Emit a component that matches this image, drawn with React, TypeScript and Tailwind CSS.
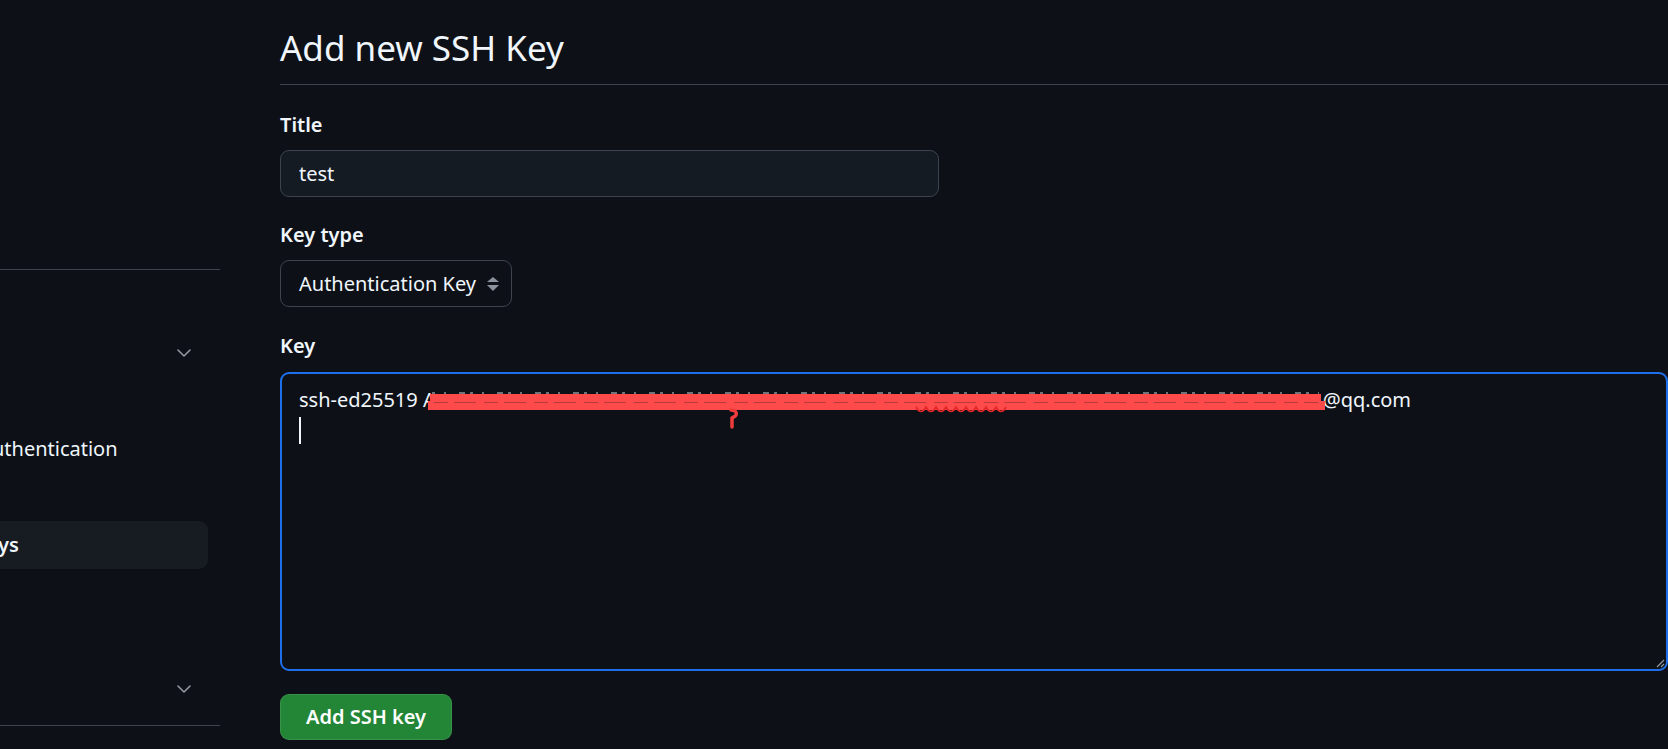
import { ChevronDown } from 'lucide-react'

const navItems = [
  { label: 'Billing and plans', chevron: true },
  { label: 'Emails' },
  { label: 'Password and authentication' },
  { label: 'Sessions' },
  { label: 'SSH and GPG keys', active: true },
  { label: 'Organizations' },
  { label: 'Enterprises' },
  { label: 'Moderation', chevron: true },
]

function Sidebar() {
  return (
    <aside className="w-[220px] shrink-0 overflow-hidden">
      <div className="h-[269px]" />
      <div className="border-t border-[#3d444d]" />
      <div className="-ml-[172px] flex h-[59px] items-center pl-4 text-[18px] font-semibold text-[#9198a1]">
        Access
      </div>
      <ul className="-ml-[172px] w-[380px]">
        {navItems.map((item) => (
          <li
            key={item.label}
            className={`flex h-12 items-center justify-between whitespace-nowrap rounded-[9px] pl-4 pr-3 ${
              item.active ? 'bg-[#171b22] font-semibold' : ''
            }`}
          >
            <span>{item.label}</span>
            {item.chevron && <ChevronDown className="h-6 w-6 text-[#9198a1]" strokeWidth={1.6} />}
          </li>
        ))}
      </ul>
      <div className="mt-3 border-t border-[#3d444d]" />
    </aside>
  )
}

function Redaction() {
  // scribble drawn over the private part of the key
  const loops = Array.from({ length: 9 }, () => 'q5 9 10 0').join(' ')
  return (
    <svg className="absolute left-0 top-0 overflow-visible" width="893" height="30" viewBox="0 0 893 30">
      <rect x="0" y="9" width="891" height="15" fill="#fd4a4a" />
      <rect x="-2" y="16" width="897" height="9" fill="#fd4a4a" />
      <line x1="2" y1="8" x2="889" y2="8" stroke="#d8d8d8" strokeWidth="1" strokeDasharray="3 9 2 13 6 5" />
      <line x1="4" y1="17.5" x2="888" y2="17.5" stroke="#b83a3a" strokeWidth="1" strokeDasharray="14 6 22 8" />
      <path d="M301 25c4 0 6 2 5 5c-1 2-3 2-4 3l0 9" fill="none" stroke="#f23c3c" strokeWidth="3.5" strokeLinecap="round" />
      <path d={`M486 22 ${loops}`} fill="none" stroke="#e4282a" strokeWidth="1.6" />
    </svg>
  )
}

export default function App() {
  return (
    <div className="flex h-[749px] w-[1668px] overflow-hidden bg-[#0d1117] font-['Noto_Sans',sans-serif] text-[20px] leading-[30px] text-[#f0f6fc]">
      <Sidebar />

      <main className="ml-[60px] min-w-0 flex-1">
        <h1 className="border-b border-[#3d444d] pt-[22px] pb-[11px] text-[35px] font-normal leading-[51px]">
          Add new SSH Key
        </h1>

        <label className="mt-[25px] block font-semibold">Title</label>
        <input
          defaultValue="test"
          className="mt-[10px] block h-[47px] w-[659px] rounded-[9px] border border-[#3d444d] bg-[#151b23] px-[18px] text-[#f0f6fc] outline-none"
        />

        <label className="mt-[23px] block font-semibold">Key type</label>
        <button
          type="button"
          className="mt-[10px] flex h-[47px] w-[232px] items-center justify-between rounded-[9px] border border-[#3d444d] bg-[#0d1117] pl-[18px] pr-[12px]"
        >
          <span>Authentication Key</span>
          <svg width="12" height="14" viewBox="0 0 12 14" className="text-[#8b929b]">
            <path d="M0 5L6 0L12 5Z" fill="currentColor" />
            <path d="M0 8L12 8L6 14Z" fill="currentColor" />
          </svg>
        </button>

        <label className="mt-[24px] block font-semibold">Key</label>
        <div className="relative mt-[11px] h-[299px] w-full rounded-[9px] border-2 border-[#1f6feb] bg-[#0d1117] pl-[17px] pt-[11px]">
          <div className="whitespace-nowrap">
            ssh-ed25519 A
            <span className="relative -ml-[6px] inline-block h-[30px] w-[893px] align-top">
              <Redaction />
            </span>
            @qq.com
          </div>
          <div className="flex h-[30px] items-center">
            <span className="h-[27px] w-[2px] bg-[#f0f6fc]" />
          </div>
          <svg className="absolute bottom-[1px] right-[1px]" width="10" height="10" viewBox="0 0 10 10">
            <path d="M9 2L2 9M9 6L6 9" stroke="#9198a1" strokeWidth="1.2" />
          </svg>
        </div>

        <button
          type="button"
          className="mt-[23px] h-[46px] w-[172px] rounded-[9px] border border-[#ffffff1a] bg-[#238636] font-semibold text-white"
        >
          Add SSH key
        </button>
      </main>
    </div>
  )
}
